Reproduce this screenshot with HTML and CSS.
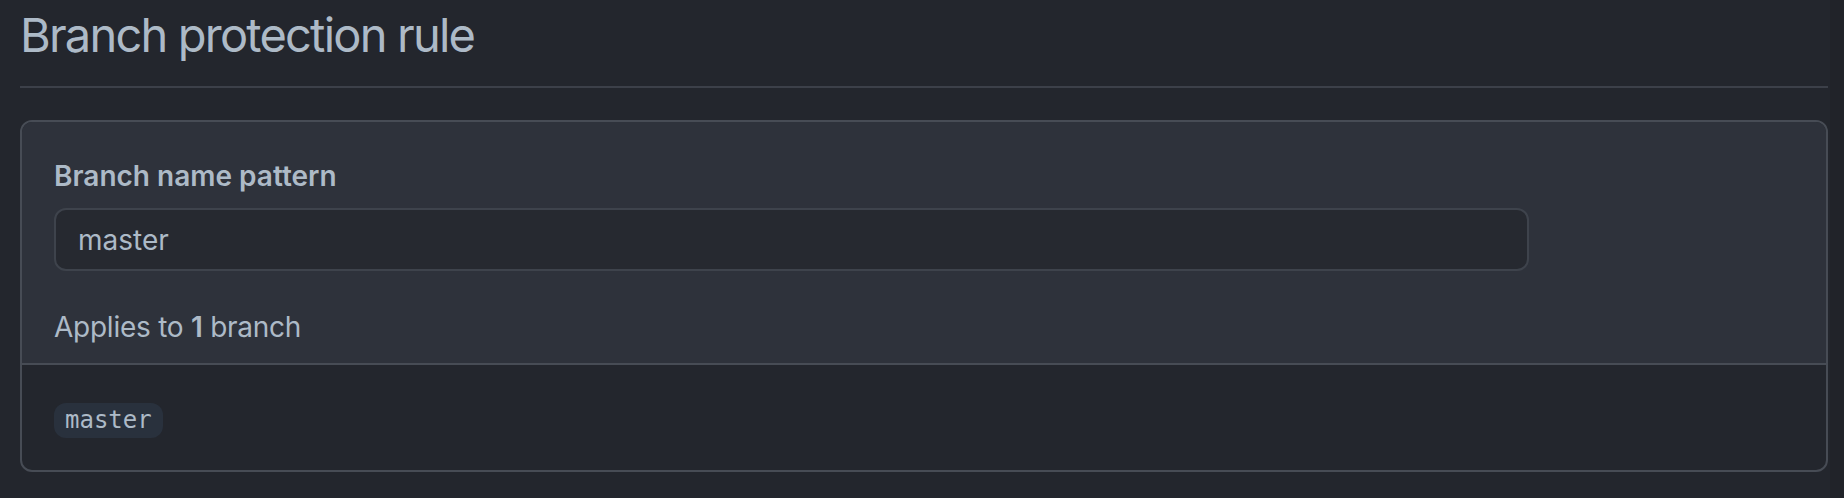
FILE: index.html
```html
<!DOCTYPE html>
<html lang="en">
<head>
<meta charset="utf-8">
<title>Branch protection rule</title>
<link rel="stylesheet" href="styles.css">
</head>
<body>
<main class="page">
  <h2 class="subhead">Branch protection rule</h2>
  <section class="box">
    <div class="box-top">
      <label class="field-label" for="pattern">Branch name pattern</label>
      <input class="field-input" id="pattern" type="text" value="master">
      <p class="applies">Applies to <strong>1</strong> branch</p>
    </div>
    <div class="box-bottom">
      <code class="branch">master</code>
    </div>
  </section>
</main>
</body>
</html>
```

FILE: styles.css
```css
html, body {
  margin: 0;
  padding: 0;
}
body {
  min-height: 100vh;
  background: linear-gradient(to right, #23262d calc(100% - 14px), #212329 calc(100% - 14px));
  font-family: Inter, "Noto Sans", sans-serif;
  color: #adbac7;
}
.page {
  padding: 0 16px 0 20px;
}
.subhead {
  margin: 0 0 32px;
  font-size: 47px;
  font-weight: 400;
  letter-spacing: -1.8px;
  line-height: 69px;
  padding-bottom: 17px;
  border-bottom: 2px solid #3c4049;
  color: #adbac7;
}
.box {
  border: 2px solid #474c55;
  border-radius: 12px;
  overflow: hidden;
  background: #23262d;
}
.box-top {
  background: #2e323b;
  padding: 34px 32px 16px;
  border-bottom: 2px solid #474c55;
  display: flex;
  flex-direction: column;
  align-items: flex-start;
}
.field-label {
  font-size: 28px;
  font-weight: 600;
  line-height: 40px;
  margin-bottom: 12px;
}
.field-input {
  box-sizing: border-box;
  width: 1475px;
  height: 63px;
  margin: 0;
  padding: 0 22px;
  font-family: Inter, "Noto Sans", sans-serif;
  font-size: 28px;
  color: #adbac7;
  background: #262930;
  border: 2px solid #3e434c;
  border-radius: 12px;
  outline: none;
}
.applies {
  margin: 36px 0 0;
  font-size: 28px;
  line-height: 40px;
  letter-spacing: -0.25px;
}
.applies strong {
  font-weight: 600;
}
.box-bottom {
  padding: 38px 32px 32px;
}
.branch {
  display: inline-block;
  font-family: "DejaVu Sans Mono", "Liberation Mono", monospace;
  font-size: 24px;
  line-height: 35px;
  padding: 0 11px;
  border-radius: 12px;
  background: #29313d;
  color: #adbac7;
  vertical-align: top;
}
```
